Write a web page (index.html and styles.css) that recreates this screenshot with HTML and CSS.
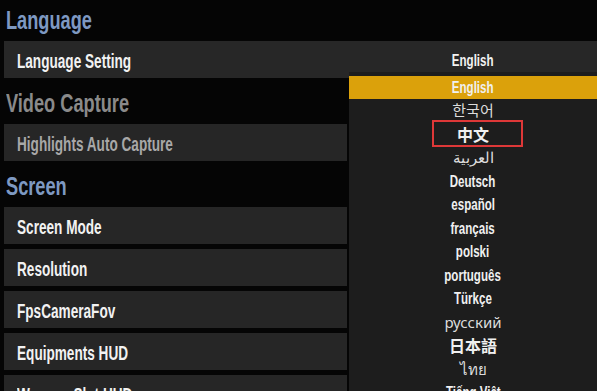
FILE: index.html
```html
<!DOCTYPE html>
<html lang="en">
<head>
    <meta charset="UTF-8">
    <meta name="viewport" content="width=device-width, initial-scale=1.0">
    <title>Settings - Language</title>
    <link rel="stylesheet" href="styles.css">
</head>
<body>
    <div class="settings">
        <div class="group">
            <h2 class="group-title"><span class="narrow">Language</span></h2>
            <div class="row row-wide">
                <span class="row-label"><span class="narrow">Language Setting</span></span>
                <span class="row-value"><span class="narrow">English</span></span>
            </div>
        </div>

        <div class="group muted">
            <h2 class="group-title"><span class="narrow">Video Capture</span></h2>
            <div class="row">
                <span class="row-label"><span class="narrow">Highlights Auto Capture</span></span>
            </div>
        </div>

        <div class="group">
            <h2 class="group-title"><span class="narrow">Screen</span></h2>
            <div class="row"><span class="row-label"><span class="narrow">Screen Mode</span></span></div>
            <div class="row"><span class="row-label"><span class="narrow">Resolution</span></span></div>
            <div class="row"><span class="row-label"><span class="narrow">FpsCameraFov</span></span></div>
            <div class="row"><span class="row-label"><span class="narrow">Equipments HUD</span></span></div>
            <div class="row"><span class="row-label"><span class="narrow">Weapon Slot HUD</span></span></div>
        </div>
    </div>

    <!-- open dropdown for Language Setting -->
    <ul class="dropdown">
        <li class="selected"><span class="narrow">English</span></li>
        <li class="plain">한국어</li>
        <li class="cjk">中文</li>
        <li class="plain">العربية</li>
        <li><span class="narrow">Deutsch</span></li>
        <li><span class="narrow">español</span></li>
        <li><span class="narrow">français</span></li>
        <li><span class="narrow">polski</span></li>
        <li><span class="narrow">português</span></li>
        <li><span class="narrow">Türkçe</span></li>
        <li class="plain">русский</li>
        <li class="cjk">日本語</li>
        <li class="plain">ไทย</li>
        <li><span class="narrow">Tiếng Việt</span></li>
        <div class="mark"></div>
    </ul>
</body>
</html>
```

FILE: styles.css
```css
body {
    margin: 0;
    background: #050505;
    font-family: "Liberation Sans", "Noto Sans CJK SC", sans-serif;
    color: #f2f2f2;
    overflow: hidden;
}
/* no condensed face installed, squeeze the sans instead */
.narrow {
    display: inline-block;
    white-space: nowrap;
    font-weight: bold;
    transform: scaleX(0.7);
    transform-origin: left center;
}
.settings {
    display: flex;
    flex-direction: column;
    gap: 5px;
    padding-left: 4px;
}
.group {
    display: flex;
    flex-direction: column;
    gap: 5px;
}
.group-title {
    margin: 0 0 -5px 2px;
    height: 41px;
    display: flex;
    align-items: flex-end;
    padding-bottom: 8px;
    box-sizing: border-box;
    font-size: 26px;
    line-height: 1;
    color: #7e99c2;
}
.muted .group-title { color: #8a8a8a; }
.muted .row-label { color: #a8a8a8; }
.row {
    width: 343px;
    height: 37px;
    background: #262626;
    display: flex;
    align-items: center;
}
.row-wide {
    width: auto;
    background: #272727;
}
.row-label {
    padding: 3px 0 0 13px;
    font-size: 20px;
    flex: 1;
}
.row-label .narrow {
    transform: scaleX(0.68);
}
.row-value {
    width: 248px;
    text-align: center;
    font-size: 17px;
    padding-top: 2px;
}
.row-value .narrow,
.dropdown .narrow {
    transform-origin: center center;
    transform: scaleX(0.68);
}
.dropdown {
    position: absolute;
    top: 72px;
    left: 349px;
    right: 0;
    bottom: 0;
    margin: 0;
    padding: 4px 0 0;
    list-style: none;
    background: #1d1d1d;
}
.dropdown li {
    height: 23.5px;
    line-height: 23.5px;
    text-align: center;
    font-size: 17px;
    color: #f0f0f0;
}
.dropdown li.selected {
    background: #dba10b;
    height: 23px;
    line-height: 23px;
}
.dropdown li.plain {
    font-family: "Noto Sans", "Noto Sans CJK KR", sans-serif;
    font-size: 15px;
    color: #dcdcdc;
}
.dropdown li.cjk {
    font-family: "Noto Sans CJK SC", sans-serif;
    font-weight: bold;
    font-size: 16px;
}
.mark {
    position: absolute;
    left: 83px;
    top: 48px;
    width: 91px;
    height: 27px;
    box-sizing: border-box;
    border: 2px solid #de3838;
}
```
